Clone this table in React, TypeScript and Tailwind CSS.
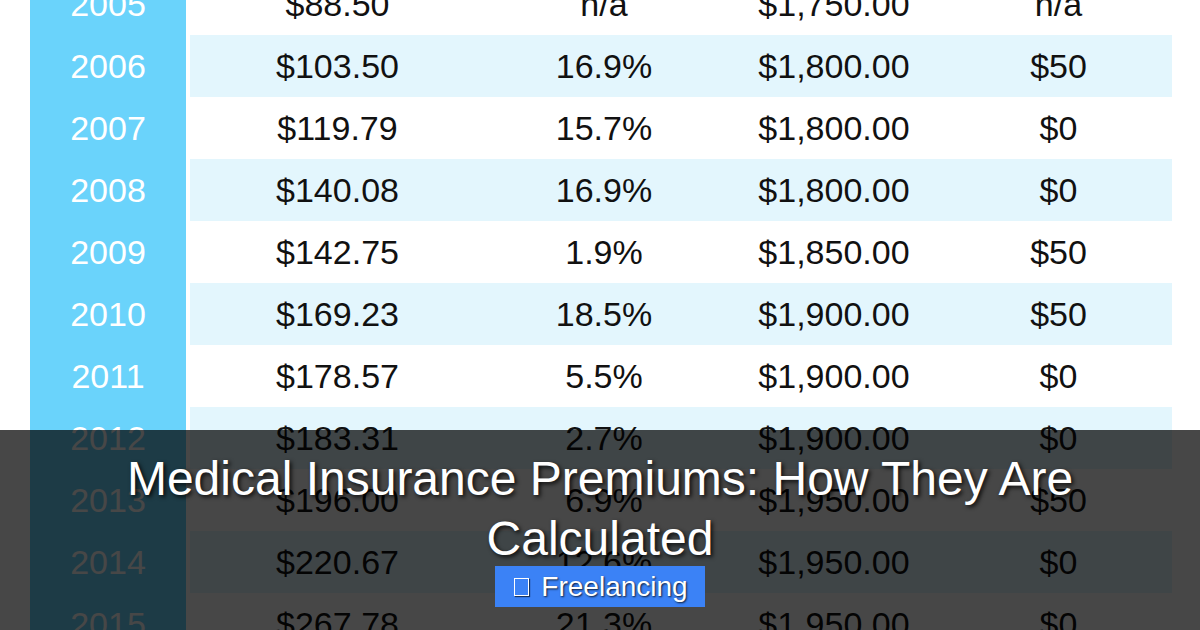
import React from 'react';

type Row = {
  year: string;
  premium: string;
  change: string;
  deductible: string;
  diff: string;
};

const rows: Row[] = [
  { year: '2005', premium: '$88.50', change: 'n/a', deductible: '$1,750.00', diff: 'n/a' },
  { year: '2006', premium: '$103.50', change: '16.9%', deductible: '$1,800.00', diff: '$50' },
  { year: '2007', premium: '$119.79', change: '15.7%', deductible: '$1,800.00', diff: '$0' },
  { year: '2008', premium: '$140.08', change: '16.9%', deductible: '$1,800.00', diff: '$0' },
  { year: '2009', premium: '$142.75', change: '1.9%', deductible: '$1,850.00', diff: '$50' },
  { year: '2010', premium: '$169.23', change: '18.5%', deductible: '$1,900.00', diff: '$50' },
  { year: '2011', premium: '$178.57', change: '5.5%', deductible: '$1,900.00', diff: '$0' },
  { year: '2012', premium: '$183.31', change: '2.7%', deductible: '$1,900.00', diff: '$0' },
  { year: '2013', premium: '$196.00', change: '6.9%', deductible: '$1,950.00', diff: '$50' },
  { year: '2014', premium: '$220.67', change: '12.6%', deductible: '$1,950.00', diff: '$0' },
  { year: '2015', premium: '$267.78', change: '21.3%', deductible: '$1,950.00', diff: '$0' }
];

export default function App() {
  return (
    <div className="relative w-[1200px] h-[630px] overflow-hidden bg-white font-['Liberation_Sans',Arial,sans-serif]">
      {/* premium table */}
      <div className="flex pl-[30px] mt-[-27px] text-[34px]">
        <div className="w-[156px] bg-[#6ad3fb] text-white">
          {rows.map((row) => (
            <div key={row.year} className="h-[62px] flex items-center justify-center">
              {row.year}
            </div>
          ))}
        </div>
        <div className="ml-[4px] w-[982px] text-[#111]">
          {rows.map((row, i) => (
            <div
              key={row.year}
              className={`h-[62px] grid grid-cols-[295px_238px_222px_227px] items-center text-center ${
                i % 2 === 1 ? 'bg-[#e3f6fd]' : 'bg-white'
              }`}
            >
              <span>{row.premium}</span>
              <span>{row.change}</span>
              <span>{row.deductible}</span>
              <span>{row.diff}</span>
            </div>
          ))}
        </div>
      </div>

      {/* title overlay */}
      <div className="absolute left-0 right-0 top-[430px] bottom-0 bg-black/[0.72] flex flex-col items-center pt-[19px]">
        <h1 className="text-white text-[48px] leading-[60px] text-center [text-shadow:2px_2px_4px_rgba(0,0,0,0.85)]">
          Medical Insurance Premiums: How They Are
          <br />
          Calculated
        </h1>
        <div className="mt-[-3px] h-[41px] bg-[#3b82f6] pl-[19px] pr-[17px] flex items-center text-white text-[28px] [text-shadow:1px_1px_2px_rgba(0,0,0,0.8)]">
          <span className="inline-block w-[15px] h-[18px] border border-white mr-[12px] shadow-[1px_1px_1px_rgba(0,0,0,0.6)]" />
          <span>Freelancing</span>
        </div>
      </div>
    </div>
  );
}
